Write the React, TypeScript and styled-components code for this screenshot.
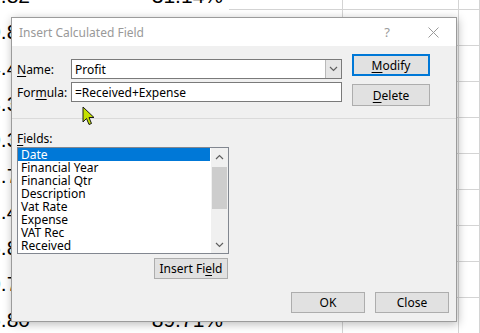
import React from 'react';
import styled, { createGlobalStyle } from 'styled-components';

const GlobalStyle = createGlobalStyle`
  html, body {
    margin: 0;
    padding: 0;
    background: #ffffff;
  }
  body {
    width: 480px;
    height: 333px;
    overflow: hidden;
    font-family: "Noto Sans", "Liberation Sans", sans-serif;
  }
`;

const sheetRows = [
  { a: '6,431.82', b: '31.14%' },
  { a: '5,120.85', b: '42.60%' },
  { a: '2,004.40', b: '18.25%' },
  { a: '3,218.35', b: '27.90%' },
  { a: '1,990.30', b: '55.12%' },
  { a: '4,512.70', b: '61.08%' },
  { a: '3,001.45', b: '47.33%' },
  { a: '2,815.80', b: '72.40%' },
  { a: '1,640.75', b: '36.91%' },
  { a: '7,355.80', b: '89.71%' },
];

const fields = [
  'Date',
  'Financial Year',
  'Financial Qtr',
  'Description',
  'Vat Rate',
  'Expense',
  'VAT Rec',
  'Received',
];

const Screen = styled.div`
  position: relative;
  width: 480px;
  height: 333px;
  overflow: hidden;
  background: #ffffff;
`;

const Sheet = styled.div`
  display: flex;
  flex-direction: column;
  margin-top: -26px;
`;

const SheetRow = styled.div`
  display: grid;
  grid-template-columns: 33px 196px 114px 116px 1fr;
  height: 36px;
`;

const NumberCell = styled.div<{ $pad: number }>`
  display: flex;
  justify-content: flex-end;
  align-items: flex-end;
  overflow: hidden;
  white-space: nowrap;
  padding: 0 ${({ $pad }) => $pad}px 4px 0;
  font-family: "Liberation Sans", Arial, sans-serif;
  font-size: 21px;
  line-height: 1;
  color: #000000;
`;

const GridCell = styled.div<{ $edge?: boolean }>`
  border-right: 1px solid #d4d4d4;
  border-bottom: ${({ $edge }) => ($edge ? 'none' : '1px solid #d4d4d4')};
`;

const Dialog = styled.div`
  position: absolute;
  left: 11px;
  top: 17px;
  width: 446px;
  height: 305px;
  box-sizing: border-box;
  border: 1px solid #9b9b9b;
  background: #f0f0f0;
  box-shadow: 1px 2px 9px rgba(0, 0, 0, 0.28);
  display: flex;
  flex-direction: column;
  font-size: 12px;
  color: #000000;
`;

const TitleBar = styled.div`
  display: flex;
  align-items: center;
  height: 28px;
  background: #ffffff;
`;

const Title = styled.div`
  flex: 1;
  padding-left: 7px;
  font-size: 12px;
  color: #999999;
`;

const CaptionButton = styled.div`
  width: 46px;
  height: 28px;
  display: flex;
  align-items: center;
  justify-content: center;
  color: #9a9a9a;
  font-size: 13px;
`;

const Body = styled.div`
  flex: 1;
  display: flex;
  flex-direction: column;
`;

const TopSection = styled.div`
  display: flex;
  gap: 10px;
  padding: 8px 0 0 5px;
`;

const FormColumn = styled.div`
  display: flex;
  flex-direction: column;
  gap: 3px;
  margin-top: 5px;
`;

const FormRow = styled.div`
  display: flex;
  align-items: center;
  height: 20px;
`;

const Label = styled.label`
  width: 54px;
`;

const U = styled.span`
  text-decoration: underline;
  text-underline-offset: 2px;
`;

const TextBox = styled.div`
  width: 271px;
  height: 20px;
  box-sizing: border-box;
  border: 1px solid #7a7a7a;
  background: #ffffff;
  display: flex;
  align-items: center;
  padding-left: 3px;
`;

const ComboBox = styled(TextBox)`
  padding-left: 0;
`;

const ComboText = styled.div`
  flex: 1;
  padding-left: 3px;
`;

const ComboArrow = styled.div`
  width: 16px;
  height: 100%;
  box-sizing: border-box;
  border-left: 1px solid #b9b9b9;
  background: #e6e6e6;
  display: flex;
  align-items: center;
  justify-content: center;
`;

const ButtonColumn = styled.div`
  display: flex;
  flex-direction: column;
  gap: 8px;
`;

const Button = styled.div<{ $w: number; $h: number; $focus?: boolean }>`
  width: ${({ $w }) => $w}px;
  height: ${({ $h }) => $h}px;
  box-sizing: border-box;
  border: ${({ $focus }) => ($focus ? '2px solid #0078d7' : '1px solid #adadad')};
  background: #e1e1e1;
  display: flex;
  align-items: center;
  justify-content: center;
`;

const Separator = styled.div`
  height: 1px;
  margin-top: 12px;
  background: #dadada;
`;

const FieldsSection = styled.div`
  width: 212px;
  margin: 12px 0 0 5px;
  display: flex;
  flex-direction: column;
`;

const FieldsLabel = styled.div`
  height: 16px;
  line-height: 16px;
`;

const ListBox = styled.div`
  height: 107px;
  box-sizing: border-box;
  border: 1px solid #828790;
  background: #ffffff;
  display: flex;
`;

const Items = styled.div`
  flex: 1;
  display: flex;
  flex-direction: column;
`;

const Item = styled.div<{ $selected?: boolean }>`
  height: 13px;
  line-height: 13px;
  padding-left: 3px;
  margin-right: 1px;
  white-space: nowrap;
  background: ${({ $selected }) => ($selected ? '#0078d7' : 'transparent')};
  color: ${({ $selected }) => ($selected ? '#ffffff' : '#000000')};
`;

const ScrollBar = styled.div`
  width: 17px;
  background: #f0f0f0;
  display: flex;
  flex-direction: column;
`;

const ScrollArrow = styled.div`
  height: 17px;
  display: flex;
  align-items: center;
  justify-content: center;
`;

const ScrollTrack = styled.div`
  flex: 1;
  padding: 2px 1px 0;
`;

const Thumb = styled.div`
  height: 42px;
  background: #cdcdcd;
`;

const InsertRow = styled.div`
  display: flex;
  justify-content: flex-end;
  margin: 4px 1px 0 0;
`;

const Footer = styled.div`
  display: flex;
  justify-content: flex-end;
  gap: 10px;
  padding: 13px 7px 0 0;
`;

const Cursor = styled.svg`
  position: absolute;
  left: 82px;
  top: 106px;
`;

const Chevron = ({ up }: { up?: boolean }) => (
  <svg width="9" height="6" viewBox="0 0 9 6">
    <polyline
      points={up ? '1,5 4.5,1.5 8,5' : '1,1 4.5,4.5 8,1'}
      fill="none"
      stroke="#606060"
      strokeWidth="1.2"
    />
  </svg>
);

export default function App() {
  return (
    <>
      <GlobalStyle />
      <Screen>
        <Sheet>
          {sheetRows.map((r, i) => (
            <SheetRow key={i}>
              <NumberCell $pad={3}>{r.a}</NumberCell>
              <NumberCell $pad={6}>{r.b}</NumberCell>
              <GridCell />
              <GridCell />
              <GridCell />
            </SheetRow>
          ))}
        </Sheet>

        <Dialog>
          <TitleBar>
            <Title>Insert Calculated Field</Title>
            <CaptionButton>?</CaptionButton>
            <CaptionButton>
              <svg width="11" height="11" viewBox="0 0 11 11">
                <path d="M0.5 0.5 L10.5 10.5 M10.5 0.5 L0.5 10.5" stroke="#9a9a9a" strokeWidth="1" />
              </svg>
            </CaptionButton>
          </TitleBar>

          <Body>
            <TopSection>
              <FormColumn>
                <FormRow>
                  <Label><U>N</U>ame:</Label>
                  <ComboBox>
                    <ComboText>Profit</ComboText>
                    <ComboArrow>
                      <Chevron />
                    </ComboArrow>
                  </ComboBox>
                </FormRow>
                <FormRow>
                  <Label>For<U>m</U>ula:</Label>
                  <TextBox>=Received+Expense</TextBox>
                </FormRow>
              </FormColumn>
              <ButtonColumn>
                <Button $w={78} $h={22} $focus><span><U>M</U>odify</span></Button>
                <Button $w={78} $h={22}><span><U>D</U>elete</span></Button>
              </ButtonColumn>
            </TopSection>

            <Separator />

            <FieldsSection>
              <FieldsLabel><U>F</U>ields:</FieldsLabel>
              <ListBox>
                <Items>
                  {fields.map((f, i) => (
                    <Item key={f} $selected={i === 0}>{f}</Item>
                  ))}
                </Items>
                <ScrollBar>
                  <ScrollArrow><Chevron up /></ScrollArrow>
                  <ScrollTrack>
                    <Thumb />
                  </ScrollTrack>
                  <ScrollArrow><Chevron /></ScrollArrow>
                </ScrollBar>
              </ListBox>
              <InsertRow>
                <Button $w={74} $h={21}><span>Insert Fi<U>e</U>ld</span></Button>
              </InsertRow>
            </FieldsSection>

            <Footer>
              <Button $w={74} $h={21}>OK</Button>
              <Button $w={74} $h={21}>Close</Button>
            </Footer>
          </Body>
        </Dialog>

        <Cursor width="14" height="20" viewBox="0 0 14 20">
          <path
            d="M1 1 L1 16 L4.5 12.5 L7 18.5 L9.5 17.5 L7 11.5 L12 11.5 Z"
            fill="#c3e000"
            stroke="#1a1a1a"
            strokeWidth="1"
            strokeLinejoin="round"
          />
        </Cursor>
      </Screen>
    </>
  );
}
